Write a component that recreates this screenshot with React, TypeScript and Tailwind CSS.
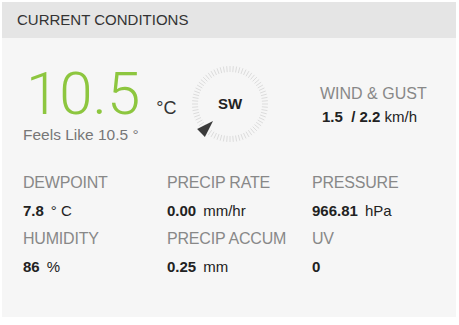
import React from 'react';

const ticks = Array.from({ length: 72 }, (_, i) => i * 5);

const Compass: React.FC<{ dir: string; deg: number }> = ({ dir, deg }) => {
  return (
    <div className="relative w-[80px] h-[80px] shrink-0">
      <svg width="80" height="80" viewBox="0 0 80 80" className="absolute inset-0 overflow-visible">
        {ticks.map((a) => {
          const r = (a * Math.PI) / 180;
          return (
            <line
              key={a}
              x1={40 + Math.sin(r) * 32}
              y1={40 - Math.cos(r) * 32}
              x2={40 + Math.sin(r) * 38}
              y2={40 - Math.cos(r) * 38}
              stroke="#dcdcdc"
              strokeWidth="1"
            />
          );
        })}
        {/* wind pointer, points in toward the centre */}
        <g transform={`rotate(${deg} 40 40)`}>
          <polygon points="40,64 34.5,81 45.5,81" fill="#3a3a3a" />
        </g>
      </svg>
      <div className="absolute inset-0 flex items-center justify-center text-[15px] font-bold text-[#222]">
        {dir}
      </div>
    </div>
  );
};

const Stat: React.FC<{ label: string; value: string; unit?: string }> = ({ label, value, unit }) => (
  <div>
    <div className="text-[16px] leading-[28px] text-[#888] tracking-[-0.2px] whitespace-nowrap">{label}</div>
    <div className="text-[15px] leading-[28px] text-[#222] whitespace-nowrap">
      <span className="font-bold">{value}</span>
      {unit && <span className="ml-[7px]">{unit}</span>}
    </div>
  </div>
);

export default function App() {
  return (
    <div className="w-[459px] h-[325px] bg-white p-[2px] font-['Liberation_Sans',Arial,sans-serif]">
      <div className="w-[454px] h-[315px] bg-[#f6f6f6] flex flex-col">
        {/* header */}
        <div className="h-[36px] bg-[#e5e5e5] px-[15px] text-[15px] leading-[36px] text-[#333]">
          CURRENT CONDITIONS
        </div>

        <div className="pl-[21px] pt-[26px]">
          {/* top row */}
          <div className="flex items-start">
            <div className="w-[167px] shrink-0">
              <div className="flex items-baseline h-[60px]">
                <span className="text-[60px] leading-[60px] font-light text-[#8dc63f] font-['Roboto',sans-serif] pl-[3px]">
                  10.5
                </span>
                <span className="ml-[16px] text-[18px] leading-[20px] text-[#333]">°C</span>
              </div>
              <div className="mt-[2px] text-[15.5px] leading-[18px] text-[#777]">Feels Like 10.5 °</div>
            </div>

            <Compass dir="SW" deg={45} />

            <div className="ml-[50px] mt-[20px]">
              <div className="text-[16px] leading-[20px] text-[#888]">WIND &amp; GUST</div>
              <div className="mt-[4px] ml-[2px] text-[15px] leading-[18px] text-[#222] whitespace-pre">
                <span className="font-bold">1.5  / 2.2</span> km/h
              </div>
            </div>
          </div>

          {/* stats grid */}
          <div className="mt-[25px] grid grid-cols-[144px_145px_1fr]">
            <Stat label="DEWPOINT" value="7.8" unit="° C" />
            <Stat label="PRECIP RATE" value="0.00" unit="mm/hr" />
            <Stat label="PRESSURE" value="966.81" unit="hPa" />
            <Stat label="HUMIDITY" value="86" unit="%" />
            <Stat label="PRECIP ACCUM" value="0.25" unit="mm" />
            <Stat label="UV" value="0" />
          </div>
        </div>
      </div>
    </div>
  );
}
